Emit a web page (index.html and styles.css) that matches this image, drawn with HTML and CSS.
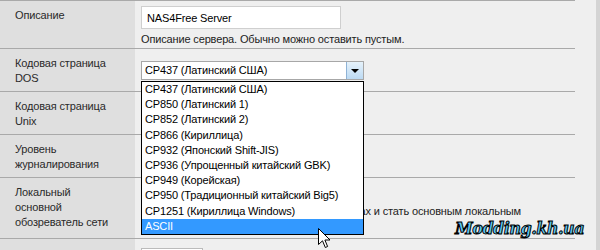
FILE: index.html
```html
<!DOCTYPE html>
<html lang="ru">
<head>
    <meta charset="UTF-8">
    <title>Samba</title>
    <link rel="stylesheet" href="styles.css">
</head>
<body>
    <div class="page">
      <div class="settings">
        <div class="row row-desc">
          <div class="label">Описание</div>
          <div class="value">
            <input class="text-input" type="text" value="NAS4Free Server">
            <div class="hint">Описание сервера. Обычно можно оставить пустым.</div>
          </div>
        </div>
        <div class="row row-mid">
          <div class="label">Кодовая страница<br>DOS</div>
          <div class="value">
            <div class="select">
              <span class="select-text">CP437 (Латинский США)</span>
              <span class="select-btn"></span>
            </div>
          </div>
        </div>
        <div class="row row-mid">
          <div class="label">Кодовая страница<br>Unix</div>
          <div class="value"></div>
        </div>
        <div class="row row-mid">
          <div class="label">Уровень<br>журналирования</div>
          <div class="value"></div>
        </div>
        <div class="row row-tall">
          <div class="label">Локальный<br>основной<br>обозреватель сети</div>
          <div class="value">
            <div class="check-line">Участвовать в выборах и стать основным локальным</div>
          </div>
        </div>
        <div class="row row-last">
          <div class="label"></div>
          <div class="value"><div class="stub"></div></div>
        </div>
      </div>

      <ul class="dropdown">
        <li>CP437 (Латинский США)</li>
        <li>CP850 (Латинский 1)</li>
        <li>CP852 (Латинский 2)</li>
        <li>CP866 (Кириллица)</li>
        <li>CP932 (Японский Shift-JIS)</li>
        <li>CP936 (Упрощенный китайский GBK)</li>
        <li>CP949 (Корейская)</li>
        <li>CP950 (Традиционный китайский Big5)</li>
        <li>CP1251 (Кириллица Windows)</li>
        <li class="selected">ASCII</li>
      </ul>

      <svg class="cursor" width="13" height="21" viewBox="0 0 13 21">
        <path d="M0.5 0.5 L0.5 16.5 L4.5 12.8 L7.3 19.5 L9.6 18.5 L6.9 12 L12 12 Z" fill="#fff" stroke="#000" stroke-width="1"/>
      </svg>

      <div class="watermark">Modding.kh.ua</div>
    </div>
</body>
</html>
```

FILE: styles.css
```css
body {
  margin: 0;
  font-family: "Liberation Sans", Arial, sans-serif;
  font-size: 11px;
  letter-spacing: -0.15px;
  color: #222;
  background-color: #efefef;
}

.page {
  position: relative;
  width: 600px;
  height: 250px;
  overflow: hidden;
  background-color: #efefef;
  border-right: 4px solid #d4d4d4;
  box-sizing: border-box;
}

.settings {
  width: 575px;
  border-top: 1px solid #a9a9a9;
}

.row {
  display: grid;
  grid-template-columns: 135px 1fr;
  column-gap: 6px;
  border-bottom: 1px solid #a9a9a9;
}

.row-desc {
  height: 47px;
}

.row-mid {
  height: 42px;
}

.row-tall {
  height: 60px;
}

.row-last {
  height: 20px;
  border-bottom: none;
}

.label {
  background-color: #dfdfdf;
  padding: 7px 0 0 15px;
  line-height: 15px;
  color: #2a2a2a;
}

.value {
  padding-top: 5px;
}

.text-input {
  display: block;
  width: 200px;
  height: 23px;
  box-sizing: border-box;
  margin: 0;
  padding: 0 5px;
  border: 1px solid #cfcfcf;
  background-color: #fff;
  font-family: inherit;
  font-size: 11px;
  letter-spacing: -0.15px;
  color: #000;
}

.hint {
  margin-top: 3px;
  line-height: 15px;
  color: #222;
}

.row-mid .value {
  padding-top: 12px;
}

.select {
  display: flex;
  width: 223px;
  height: 19px;
  box-sizing: border-box;
  border: 1px solid #a7a7a7;
  background-color: #fff;
}

.select-text {
  flex: 1;
  padding-left: 3px;
  line-height: 17px;
  color: #000;
}

.select-btn {
  position: relative;
  width: 16px;
  border-left: 1px solid #8fb3d6;
  background: linear-gradient(#e6f2fb, #bcdaf3);
}

.select-btn::after {
  content: "";
  position: absolute;
  left: 4px;
  top: 7px;
  border-left: 4px solid transparent;
  border-right: 4px solid transparent;
  border-top: 4px solid #000;
}

.row-tall .value {
  padding-top: 26px;
}

.check-line {
  width: 380px;
  line-height: 15px;
  text-align: right;
  white-space: nowrap;
}

.stub {
  width: 60px;
  height: 12px;
  border: 1px solid #bbb;
  border-bottom: none;
  background-color: #fff;
  margin-top: 4px;
}

.dropdown {
  position: absolute;
  left: 141px;
  top: 81px;
  width: 223px;
  margin: 0;
  padding: 0;
  list-style: none;
  box-sizing: border-box;
  border: 1px solid #000;
  background-color: #fff;
  color: #000;
}

.dropdown li {
  height: 15.2px;
  line-height: 15px;
  padding-left: 3px;
  white-space: nowrap;
}

.dropdown .selected {
  background-color: #3399ff;
  color: #fff;
}

.cursor {
  position: absolute;
  left: 318px;
  top: 228px;
}

.watermark {
  position: absolute;
  left: 455px;
  top: 219px;
  font-family: "DejaVu Serif", serif;
  font-size: 16px;
  font-weight: bold;
  font-style: italic;
  letter-spacing: -0.5px;
  color: #5ac8f5;
  -webkit-text-stroke: 1px #000;
}
```
